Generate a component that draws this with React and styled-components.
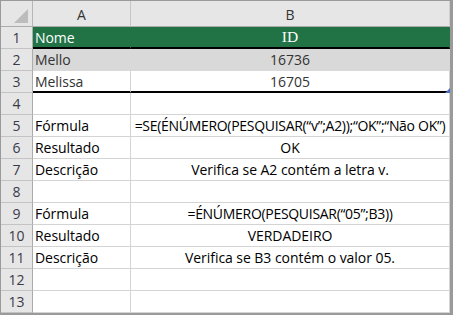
import React from "react";
import styled, { createGlobalStyle, css } from "styled-components";

const Global = createGlobalStyle`
  html, body { margin: 0; padding: 0; background: #fff; }
  body { font-family: "Open Sans", "Noto Sans", sans-serif; }
`;

const Sheet = styled.div`
  width: 453px;
  height: 315px;
  box-sizing: border-box;
  border-style: solid;
  border-color: #9a9a9a;
  border-width: 1px 3px 2px 1px;
  display: grid;
  grid-template-columns: 32px 98px 319px;
  grid-template-rows: 26px repeat(13, 22px);
  overflow: hidden;
`;

const Corner = styled.div`
  background: #e6e6e6;
  border-right: 1px solid #b6b6b6;
  border-bottom: 1px solid #ababab;
  box-sizing: border-box;
  display: flex;
  align-items: flex-end;
  justify-content: flex-end;
  padding: 0 4px 3px 0;
`;

const ColHead = styled.div`
  background: #e6e6e6;
  border-right: 1px solid ${(p) => (p.$last ? "#d0d0d0" : "#c6c6c6")};
  border-bottom: 1px solid #ababab;
  box-sizing: border-box;
  display: flex;
  align-items: center;
  justify-content: center;
  padding-top: 1px;
  font-size: 14px;
  color: #333;
`;

const RowHead = styled.div`
  background: #e6e6e6;
  border-right: 1px solid #ababab;
  border-bottom: 1px solid #c3c3c3;
  box-sizing: border-box;
  display: flex;
  align-items: center;
  justify-content: center;
  font-size: 14px;
  color: #3a3a4a;
`;

const Cell = styled.div`
  position: relative;
  box-sizing: border-box;
  background: ${(p) => p.$bg || "#fff"};
  border-right: 1px solid ${(p) => (p.$bg ? p.$bg : "#d4d4d4")};
  border-bottom: ${(p) =>
    p.$thick ? "2px solid #000" : `1px solid ${p.$bg ? p.$bg : "#d4d4d4"}`};
  display: flex;
  align-items: center;
  justify-content: ${(p) => (p.$center ? "center" : "flex-start")};
  padding: 0 0 0 ${(p) => (p.$center ? "0" : "2px")};
  font-size: 14px;
  color: ${(p) => p.$color || "#000"};
  white-space: nowrap;
  letter-spacing: ${(p) => (p.$tight ? "-0.3px" : "-0.05px")};
  ${(p) =>
    p.$serif &&
    css`
      font-family: "Liberation Serif", "DejaVu Serif", serif;
      font-size: 15.5px;
    `}
`;

const FillHandle = styled.span`
  position: absolute;
  right: -1px;
  bottom: -2px;
  width: 5px;
  height: 5px;
  background: #4a6fc4;
  clip-path: polygon(100% 0, 100% 100%, 0 100%);
`;

const GREEN = "#217346";
const GRAY = "#d9d9d9";

const rows = [
  { a: "Nome", b: "ID", aProps: { $bg: GREEN, $color: "#fff", $thick: true }, bProps: { $bg: GREEN, $color: "#fff", $thick: true, $center: true, $serif: true } },
  { a: "Mello", b: "16736", aProps: { $bg: GRAY, $color: "#333" }, bProps: { $bg: GRAY, $color: "#333", $center: true } },
  { a: "Melissa", b: "16705", aProps: { $thick: true, $color: "#333" }, bProps: { $thick: true, $center: true, $color: "#333" }, handle: true },
  { a: "", b: "" },
  { a: "Fórmula", b: "=SE(ÉNÚMERO(PESQUISAR(“v”;A2));“OK”;“Não OK”)", bProps: { $center: true, $tight: true } },
  { a: "Resultado", b: "OK", bProps: { $center: true } },
  { a: "Descrição", b: "Verifica se A2 contém a letra v.", bProps: { $center: true } },
  { a: "", b: "" },
  { a: "Fórmula", b: "=ÉNÚMERO(PESQUISAR(“05”;B3))", bProps: { $center: true, $tight: true } },
  { a: "Resultado", b: "VERDADEIRO", bProps: { $center: true } },
  { a: "Descrição", b: "Verifica se B3 contém o valor 05.", bProps: { $center: true } },
  { a: "", b: "" },
  { a: "", b: "" },
];

export default function App() {
  return (
    <>
      <Global />
      <Sheet>
        <Corner>
          <svg width="14" height="14" viewBox="0 0 14 14">
            <polygon points="14,0 14,14 0,14" fill="#bcbcbc" />
          </svg>
        </Corner>
        <ColHead>A</ColHead>
        <ColHead $last>B</ColHead>
        {rows.map((r, i) => (
          <React.Fragment key={i}>
            <RowHead>{i + 1}</RowHead>
            <Cell {...(r.aProps || {})}>{r.a}</Cell>
            <Cell {...(r.bProps || {})}>
              {r.b}
              {r.handle && <FillHandle />}
            </Cell>
          </React.Fragment>
        ))}
      </Sheet>
    </>
  );
}
